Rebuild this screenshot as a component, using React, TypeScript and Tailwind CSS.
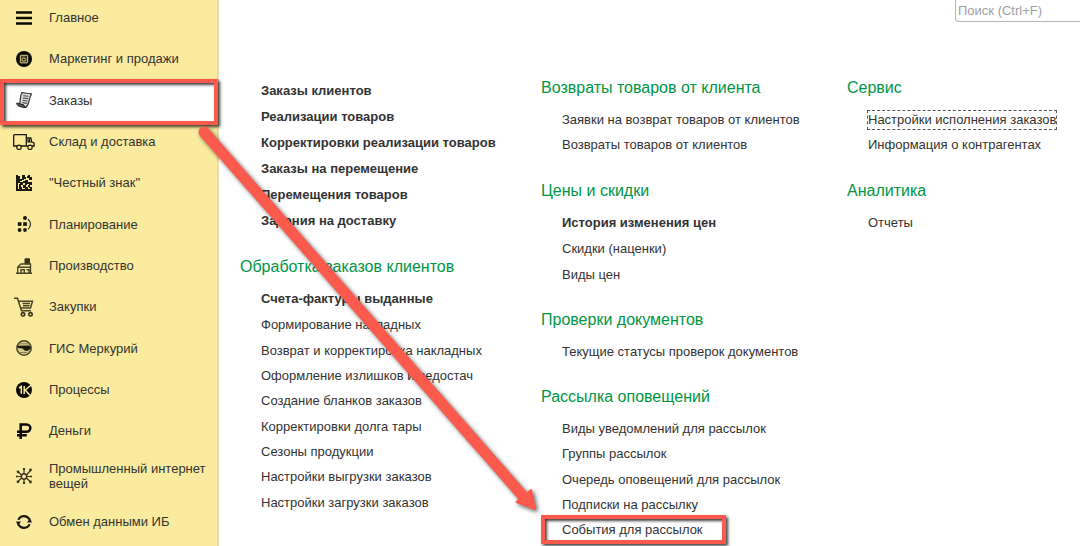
import type { ReactNode } from "react";

type NavEntry = { label: string; icon: ReactNode; active?: boolean };
type Item = { label: string; bold?: boolean; focused?: boolean; marked?: boolean };
type Section = { title?: string; items: Item[] };

function Glyph({ children, wide }: { children: ReactNode; wide?: boolean }) {
  return (
    <svg
      viewBox={wide ? "0 0 22 20" : "0 0 16 16"}
      className={wide ? "h-5 w-[22px]" : "h-4 w-4"}
      fill="none"
      stroke="#1c1a10"
      aria-hidden="true"
    >
      {children}
    </svg>
  );
}

const nav: NavEntry[] = [
  {
    label: "Главное",
    icon: (
      <Glyph>
        <path d="M0 2.5h16M0 8h16M0 13.5h16" strokeWidth="2.6" stroke="#0c0b06" />
      </Glyph>
    ),
  },
  {
    label: "Маркетинг и продажи",
    icon: (
      <Glyph>
        <circle cx="8" cy="8" r="8" fill="#0a0905" stroke="none" />
        <rect x="4.3" y="4.3" width="7.4" height="7.6" rx="0.5" fill="#4a4630" stroke="#d8cc88" strokeWidth="1" />
        <circle cx="7.8" cy="8.6" r="1.5" fill="#0a0905" stroke="#d8cc88" strokeWidth="1" />
        <path d="M9.6 5.8h1.4" stroke="#0a0905" />
      </Glyph>
    ),
  },
  {
    label: "Заказы",
    active: true,
    icon: (
      <Glyph>
        <path d="M5.800 .7C8.500 1.500 12 1 15.500 1.900 14.200 4 13.800 6 13 9 12.300 12 11.500 14.500 9.500 15.400L3.500 12.500C4.300 10 4.200 3.500 5.800 .7Z" fill="#dedede" stroke="#333" strokeWidth="1.200" />
        <path d="M.8 11 7.800 12.800C8 14 8.500 15 9.500 15.400 7 15.600 4 14.600 2.300 13.900 1.300 13.300.8 12.300.8 11Z" fill="#555" stroke="#222" />
        <path d="M7.200 3.700l5.300.5M6.800 6l5.200.6M6.500 8.300l5 .7M6.100 10.500l4.700.9" stroke="#444" strokeWidth="1.100" />
      </Glyph>
    ),
  },
  {
    label: "Склад и доставка",
    icon: (
      <Glyph wide>
        <path d="M.7 2.700h12.600v11.300H8M4 14H.7V2.700M13.300 6h4.500l1 4 2.300.9V14h-2M13.300 14h1.500" strokeWidth="1.300" />
        <path d="M15 7v3h3.500M16.500 7v3" strokeWidth="1.200" />
        <circle cx="6" cy="15.300" r="2.200" strokeWidth="1.200" />
        <circle cx="17" cy="15.300" r="2.200" strokeWidth="1.200" />
      </Glyph>
    ),
  },
  {
    label: "\"Честный знак\"",
    icon: (
      <Glyph>
        <path d="M1 0v15h15" strokeWidth="2" />
        <path
          stroke="none"
          fill="#1c1a10"
          d="M2 1h2v3h2v2H4v2H2zM6 0h3v2h1v2H8v1H6zM12 0h2v2h2v3h-3V3h-2V1h1zM9 5h3v2h2v2h-3v1H9V8H7V6h2zM4 7h3v3H5v2H3V9h1zM13 7h3v3h-2v1h-1zM7 10h3v2h2v2H9v-1H7zM12 10h2v3h-1v-1h-1zM3 12h3v2H3zM14 12h2v2h-2z"
        />
      </Glyph>
    ),
  },
  {
    label: "Планирование",
    icon: (
      <Glyph>
        <g fill="#1c1a10" stroke="none">
          <circle cx="9" cy="2" r="2" />
          <rect x="1.800" y="6.200" width="3.700" height="3.700" />
          <rect x="7.200" y="6.200" width="3.700" height="3.700" />
          <circle cx="3.600" cy="14" r="1.900" />
          <circle cx="9" cy="14" r="1.900" />
        </g>
        <path d="M12 3.200c3.300 2.500 3.300 7.600 0 10.200" strokeWidth="1.100" />
      </Glyph>
    ),
  },
  {
    label: "Производство",
    icon: (
      <Glyph>
        <path d="M9 .8h4.500v5H9z" fill="#3a351e" stroke="#3a351e" />
        <path d="M1.700 15.300V9L5 6h9.500v9.300M0 15.300h16M2 9.300h12.500M5 15v-3.300h3.300V15M10.500 11.700h2.500V15" stroke="#4a4427" strokeWidth="1.400" />
      </Glyph>
    ),
  },
  {
    label: "Закупки",
    icon: (
      <Glyph wide>
        <path d="M1 1.200h3.500l4 12.600h9.500M6 4.200h13.500l-2 6.800H8M9.500 6.600h7.500M10 8.800h6.500" stroke="#4a4427" strokeWidth="1.500" />
        <circle cx="10" cy="17.300" r="1.700" stroke="#3a351e" strokeWidth="1.600" />
        <circle cx="17.500" cy="17.300" r="1.700" stroke="#3a351e" strokeWidth="1.600" />
      </Glyph>
    ),
  },
  {
    label: "ГИС Меркурий",
    icon: (
      <Glyph>
        <circle cx="8" cy="8" r="7.200" fill="#d9cc86" stroke="#4a4427" strokeWidth="1.500" />
        <path d="M1 5.800 13.500 5.500 15 8.200 11.500 11 8.500 10.500 6.500 8.500 2 8Z" fill="#1c1a10" stroke="none" />
        <path d="M3 3.800h10M4 12.500h7" stroke="#8d8250" />
      </Glyph>
    ),
  },
  {
    label: "Процессы",
    icon: (
      <Glyph>
        <circle cx="8" cy="8" r="8" fill="#0a0905" stroke="none" />
        <path d="M3 6.200 5.300 4.500v7.300M8.200 4v8M15.500 2.800 9.300 8l4.500 5.200" stroke="#fbeb9e" strokeWidth="1.500" />
      </Glyph>
    ),
  },
  {
    label: "Деньги",
    icon: (
      <Glyph>
        <path d="M4.700 16V1.400h5.600c5.400 0 5.400 7.300 0 7.300H1M1 12.300h9.800" stroke="#0a0905" strokeWidth="2.500" />
      </Glyph>
    ),
  },
  {
    label: "Промышленный интернет вещей",
    icon: (
      <Glyph>
        <circle cx="8" cy="8.500" r="2.700" stroke="#3a351e" strokeWidth="1.500" />
        <path d="M8 5.500V1M8 11.500V15M5.500 7 2 3.800M10.500 7l4-4.500M5.500 10 2 13.500M10.500 10l4 4M5 8.500H0M11 8.500h5" stroke="#3a351e" strokeWidth="1.200" />
        <g fill="#3a351e" stroke="none">
          <circle cx="8" cy="1" r="1.200" />
          <circle cx="2" cy="3.800" r="1.400" />
          <circle cx="14.500" cy="2" r="1.400" />
          <circle cx="2" cy="13.800" r="1.400" />
          <circle cx="14.500" cy="14" r="1.400" />
          <circle cx="8" cy="15" r="1.200" />
          <circle cx="1" cy="8.500" r="1" />
          <circle cx="15" cy="8.500" r="1" />
        </g>
      </Glyph>
    ),
  },
  {
    label: "Обмен данными ИБ",
    icon: (
      <Glyph>
        <path d="M2.300 5.800A6.200 6.200 0 0 1 13.500 5.500M13.700 10.200A6.200 6.200 0 0 1 2.500 10.500" stroke="#1c1a10" strokeWidth="2.100" />
        <path d="M11 8.500h5l-2-4.500zM5 7.500H0L2 12z" fill="#1c1a10" stroke="none" />
      </Glyph>
    ),
  },
];

const columns: Section[][] = [
  [
    {
      items: [
        { label: "Заказы клиентов", bold: true },
        { label: "Реализации товаров", bold: true },
        { label: "Корректировки реализации товаров", bold: true },
        { label: "Заказы на перемещение", bold: true },
        { label: "Перемещения товаров", bold: true },
        { label: "Задания на доставку", bold: true },
      ],
    },
    {
      title: "Обработка заказов клиентов",
      items: [
        { label: "Счета-фактуры выданные", bold: true },
        { label: "Формирование накладных" },
        { label: "Возврат и корректировка накладных" },
        { label: "Оформление излишков и недостач" },
        { label: "Создание бланков заказов" },
        { label: "Корректировки долга тары" },
        { label: "Сезоны продукции" },
        { label: "Настройки выгрузки заказов" },
        { label: "Настройки загрузки заказов" },
      ],
    },
  ],
  [
    {
      title: "Возвраты товаров от клиента",
      items: [{ label: "Заявки на возврат товаров от клиентов" }, { label: "Возвраты товаров от клиентов" }],
    },
    {
      title: "Цены и скидки",
      items: [{ label: "История изменения цен", bold: true }, { label: "Скидки (наценки)" }, { label: "Виды цен" }],
    },
    { title: "Проверки документов", items: [{ label: "Текущие статусы проверок документов" }] },
    {
      title: "Рассылка оповещений",
      items: [
        { label: "Виды уведомлений для рассылок" },
        { label: "Группы рассылок" },
        { label: "Очередь оповещений для рассылок" },
        { label: "Подписки на рассылку" },
        { label: "События для рассылок", marked: true },
      ],
    },
  ],
  [
    {
      title: "Сервис",
      items: [{ label: "Настройки исполнения заказов", focused: true }, { label: "Информация о контрагентах" }],
    },
    { title: "Аналитика", items: [{ label: "Отчеты" }] },
  ],
];

const frame =
  "pointer-events-none absolute z-10 border-4 border-[#fd5a4e] shadow-[2px_2px_3px_rgba(0,0,0,0.75),inset_2px_2px_3px_rgba(0,0,0,0.75)]";

function Sidebar() {
  return (
    <nav className="w-[219px] shrink-0 border-r-2 border-[#e6dcae] bg-[#fbeb9e]">
      <ul>
        {nav.map((entry) => (
          <li
            key={entry.label}
            className={`relative h-[41px] first:h-[38px] first:pb-[3px] nth-[3n]:h-[42px] nth-[12]:h-[50px]! ${entry.active ? "bg-white" : ""}`}
          >
            <a href="#" className="flex h-full items-center gap-[2px] pr-2">
              <span className="flex w-[47px] shrink-0 justify-center">{entry.icon}</span>
              <span className="text-[13px] leading-[15px]">{entry.label}</span>
            </a>
            {entry.active && <span className={`${frame} -bottom-1 left-0 -right-px top-0`} />}
          </li>
        ))}
      </ul>
    </nav>
  );
}

function MenuSection({ title, items }: Section) {
  return (
    <section className={title ? "" : "pt-[9px]"}>
      {title && <h2 className="flex h-[38px] items-center text-base text-[#009646]">{title}</h2>}
      <ul className="pl-[21px]">
        {items.map((item) => (
          <li
            key={item.label}
            className={`relative flex items-center text-[13px] whitespace-nowrap ${item.bold ? "h-[26px] font-bold" : "h-[25px] nth-[3n+2]:h-[26px]"}`}
          >
            <a href="#" className={item.focused ? "leading-[18px] outline-1 outline-dashed outline-[#555]" : ""}>
              {item.label}
            </a>
            {item.marked && <span className={`${frame} -bottom-px -left-[21px] -top-[2px] w-[185px]`} />}
          </li>
        ))}
      </ul>
    </section>
  );
}

export default function App() {
  return (
    <div className="relative flex min-h-screen overflow-hidden bg-white font-['Liberation_Sans',Arial,sans-serif] text-[#333]">
      <Sidebar />
      <main className="min-w-0 flex-1">
        <header className="flex h-[69px] items-start justify-end">
          <input
            type="search"
            aria-label="Поиск"
            placeholder="Поиск (Ctrl+F)"
            className="h-[22px] w-[125px] rounded-bl-sm border-b border-l border-[#b4b4b4] pb-px pl-[2px] text-[13px] outline-none placeholder:text-[#a0a0a0]"
          />
        </header>
        <div className="grid grid-cols-[301fr_306fr_233fr] pl-[21px]">
          {columns.map((sections, index) => (
            <div key={index} className="flex flex-col gap-[14px]">
              {sections.map((section) => (
                <MenuSection key={section.title ?? "main"} {...section} />
              ))}
            </div>
          ))}
        </div>
      </main>
      <svg
        className="pointer-events-none absolute left-0 top-0 z-20 drop-shadow-[2px_2px_2px_rgba(0,0,0,0.6)]"
        width="560"
        height="530"
        viewBox="0 0 560 530"
        aria-hidden="true"
      >
        <circle cx="204" cy="132" r="5.500" fill="#fd5a4e" />
        <path d="M204 132 523 496" stroke="#fd5a4e" strokeWidth="11" />
        <path d="M535 509 516.500 502 531 490Z" fill="#fd5a4e" stroke="#fd5a4e" strokeWidth="2" strokeLinejoin="round" />
      </svg>
    </div>
  );
}
